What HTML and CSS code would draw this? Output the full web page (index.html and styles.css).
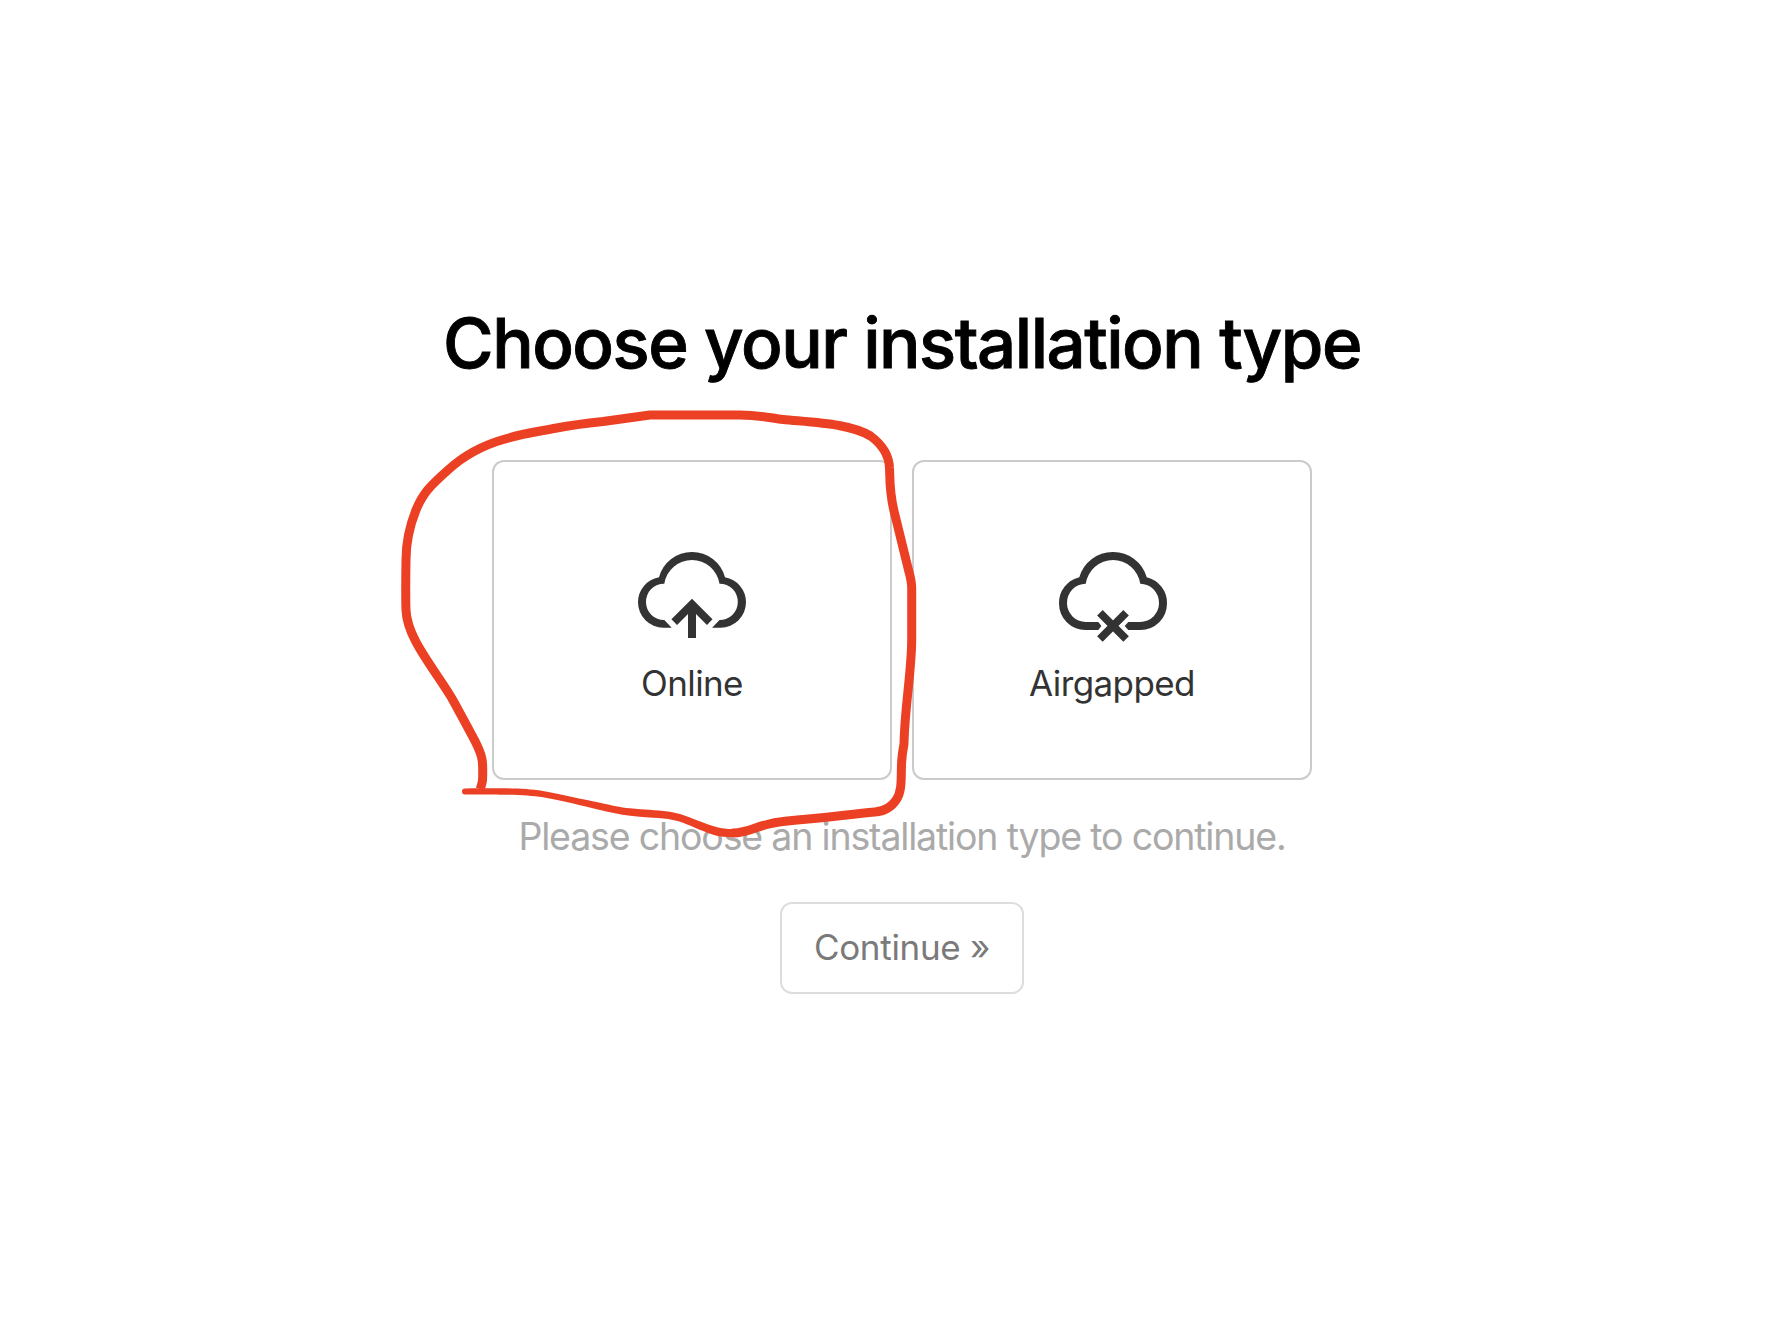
FILE: index.html
```html
<!DOCTYPE html>
<html lang="en">
<head>
<meta charset="utf-8">
<title>Choose your installation type</title>
<link rel="stylesheet" href="styles.css">
</head>
<body>
<main class="setup">
  <h1 class="title">Choose your installation type</h1>
  <div class="options">
    <div class="option">
      <svg class="icon" viewBox="0 0 108 92" width="108" height="92" aria-hidden="true">
        <path d="M33.7 75.7H25.4A25.4 25.4 0 0 1 0 50.3A25.4 25.4 0 0 1 21 25.3A34 34 0 0 1 54 0A34 34 0 0 1 87 25.3A25.4 25.4 0 0 1 108 50.3A25.4 25.4 0 0 1 82.6 75.7H74.1L81.5 68A18 18 0 0 0 99.8 50.3A18 18 0 0 0 81.5 31.7A28 28 0 0 0 54 8A28 28 0 0 0 26.3 31.7A18 18 0 0 0 8 50.3A18 18 0 0 0 26.3 68Z"/>
        <path d="M54 46.7L74.5 67.3L69 73L58 62V86H50V62L39 73L33.4 67.3Z"/>
      </svg>
      <span class="label">Online</span>
    </div>
    <div class="option">
      <svg class="icon" viewBox="-1 0 108 92" width="108" height="92" aria-hidden="true">
        <path d="M39.3 78H26.4A26.4 26.4 0 0 1 0 51.6A26.4 26.4 0 0 1 20.3 25.3A34.6 34.6 0 0 1 54 0A34.6 34.6 0 0 1 87.7 25.3A26.4 26.4 0 0 1 108 51.6A26.4 26.4 0 0 1 81.6 78H69.3L65.7 74L69.3 69.9H81.3A18.7 18.7 0 0 0 100 51.2A19 19 0 0 0 81.3 31.7A28 28 0 0 0 54 8A28 28 0 0 0 26.7 31.7A19 19 0 0 0 8 51.2A18.7 18.7 0 0 0 26.7 69.9H39.3L42.4 74Z"/>
        <path d="M40.9 60.7L67.1 87.1M67.1 60.7L40.9 87.1" fill="none" stroke="#333" stroke-width="7.8"/>
      </svg>
      <span class="label">Airgapped</span>
    </div>
  </div>
  <p class="hint">Please choose an installation type to continue.</p>
  <button class="continue" type="button">Continue »</button>
</main>
<svg class="marker" viewBox="0 0 1776 1334" width="1776" height="1334" aria-hidden="true">
  <path class="marker-tail" d="M465 788.4C505 788 522 788 543 791C565 795 580 799 600 802.700C612 805.300 620 807.300 630 808.300C645 810 655 809.800 668 811.500C680 813 690 817.500 703 822.500C714 826.500 720 829 733 829V837.200C718 837.200 712 834.500 703 831C690 826 682 821 668 819C655 817.500 643 817.200 630 815.700C620 814.500 610 812.300 600 810C580 805.500 565 801 543 797.300C525 794.500 505 794.400 465 794.400A3 3 0 0 1 465 788.400Z"/>
  <path class="marker-line" d="M732 833C750 833.500 758 823.500 785 821.200C820 818.500 845 815 875 812Q889 811 896.500 799.500C902 791 901 780 901.500 765Q901.700 756 904 744C904.500 710 911.700 670 911.700 640V590Q912 582 908.500 570L894 511C889 490 890 475 889.500 468C889 454 880 443 870.500 436C850 424 820 423 783 419.500C772 418.300 760 415 740 415H650L603 421.500Q575 424.500 556.700 428C536 432 523 433.500 505 439C480 446 460 459 448 470C430 486 423 493 416 510C408 530 406 545 406 560C405.700 580 405.500 597 406 610C407 638 433 667 451.700 698C459 711 468 728 475 741C482 755 482.700 760 482.700 769C482.700 781 483 780 480.300 789"/>
</svg>
</body>
</html>
```
FILE: styles.css
```css
* { box-sizing: border-box; }
body {
  margin: 0;
  min-height: 1334px;
  background: #fff;
  font-family: Inter, "Liberation Sans", sans-serif;
}
.setup {
  display: flex;
  flex-direction: column;
  align-items: center;
  padding: 301px 0 0 28px;
}
.title {
  margin: 0 0 75px;
  font-size: 69px;
  font-weight: 500;
  line-height: 84px;
  letter-spacing: -1.5px;
  color: #000;
  -webkit-text-stroke: 0.9px #000;
  white-space: nowrap;
}
.options { display: flex; gap: 20px; }
.option {
  display: flex;
  flex-direction: column;
  align-items: center;
  width: 400px;
  height: 320px;
  padding-top: 90px;
  border: 2px solid #cbcbcb;
  border-radius: 12px;
}
.icon { display: block; overflow: visible; fill: #333; }
.label {
  margin-top: 17px;
  font-size: 35px;
  line-height: 44px;
  letter-spacing: -0.6px;
  color: #333;
}
.hint {
  margin: 33px 0 41px;
  font-size: 37.5px;
  font-weight: 400;
  line-height: 48px;
  letter-spacing: -1.17px;
  color: #aaa;
  white-space: nowrap;
}
.continue {
  width: 244px;
  height: 92px;
  padding: 0 0 2px;
  border: 2px solid #ddd;
  border-radius: 12px;
  background: #fff;
  font-family: inherit;
  font-size: 35px;
  letter-spacing: -0.3px;
  color: #7a7a7a;
}
.marker {
  position: absolute;
  top: 0;
  left: 0;
  pointer-events: none;
}
.marker-tail { fill: #ec4025; }
.marker-line {
  fill: none;
  stroke: #ec4025;
  stroke-width: 9;
  stroke-linejoin: round;
}
```
